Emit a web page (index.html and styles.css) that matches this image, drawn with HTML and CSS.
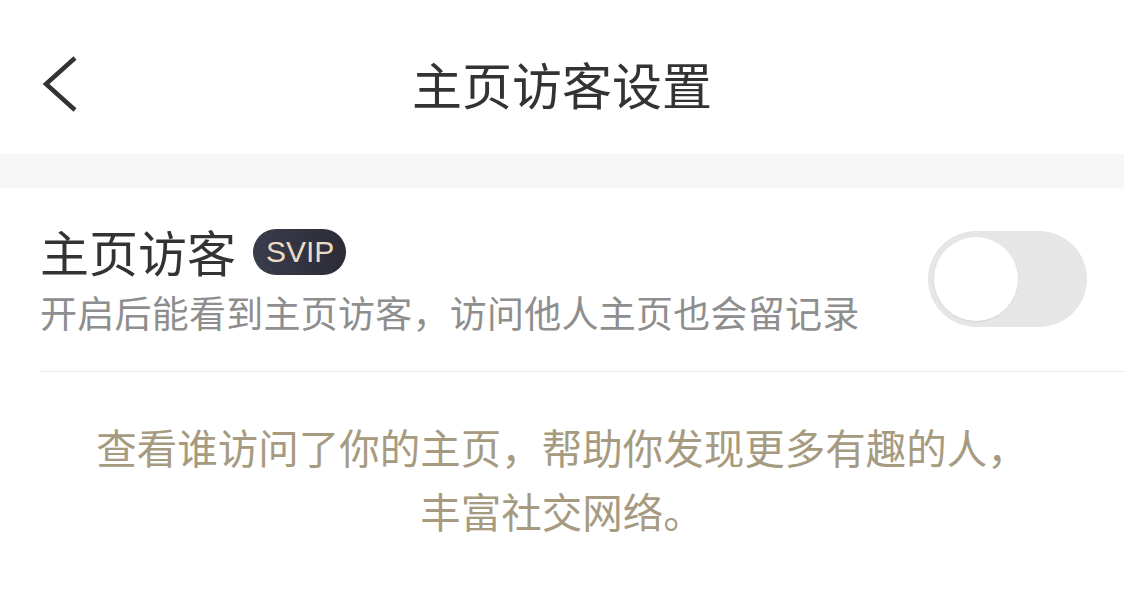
FILE: index.html
```html
<!DOCTYPE html>
<html>

<head>
    <meta charset="utf-8" />
    <title>主页访客设置</title>
    <link rel="stylesheet" href="styles.css">
</head>

<body>
    <div id="app">
        <div class="nav">
            <div class="back">
                <svg width="40" height="60" viewBox="0 0 40 60">
                    <polyline points="33,3 4,29 33,55" fill="none" stroke="#333" stroke-width="4.5" stroke-linecap="butt" stroke-linejoin="miter" />
                </svg>
            </div>
            <div class="nav-title">主页访客设置</div>
            <div></div>
        </div>

        <div class="gap"></div>

        <div class="section">
            <div class="row">
                <div class="info">
                    <div class="label">
                        <span>主页访客</span>
                        <span class="badge">SVIP</span>
                    </div>
                    <div class="desc">开启后能看到主页访客，访问他人主页也会留记录</div>
                </div>
                <div class="switch">
                    <div class="knob"></div>
                </div>
            </div>
        </div>

        <p class="tip">查看谁访问了你的主页，帮助你发现更多有趣的人，<br>丰富社交网络。</p>
    </div>
</body>

</html>
```

FILE: styles.css
```css
body {
    padding: 0;
    margin: 0;
    background: #fff;
    font-family: "Noto Sans CJK SC", "Noto Sans", sans-serif;
}

.nav {
    display: grid;
    grid-template-columns: 1fr auto 1fr;
    align-items: center;
    height: 154px;
    padding-top: 12px;
    box-sizing: border-box;
}

.back {
    padding-left: 42px;
    display: flex;
    margin-top: 4px;
}

.nav-title {
    font-size: 50px;
    line-height: 60px;
    color: #333;
}

.gap {
    height: 34px;
    background-color: #f6f6f6;
}

.section {
    margin-left: 40px;
    border-bottom: 1px solid #ebebeb;
}

.row {
    display: flex;
    align-items: center;
    justify-content: space-between;
    padding: 33px 37px 34px 0;
}

.label {
    display: flex;
    align-items: center;
    font-size: 49px;
    line-height: 60px;
    color: #333;
}

.badge {
    margin-left: 17px;
    margin-top: 2px;
    height: 46px;
    padding: 0 12px 0 13px;
    border-radius: 23px;
    background: linear-gradient(90deg, #3b3c4c, #2b2c36);
    color: #eadcc4;
    font-family: "Liberation Sans", Arial, sans-serif;
    font-size: 30px;
    line-height: 46px;
}

.desc {
    margin-top: 6px;
    font-size: 37px;
    letter-spacing: 0.25px;
    line-height: 50px;
    color: #8e8e8e;
}

.switch {
    width: 159px;
    height: 96px;
    border-radius: 48px;
    background-color: #e6e6e6;
    display: flex;
    align-items: center;
    padding-left: 6px;
    box-sizing: border-box;
}

.knob {
    width: 84px;
    height: 84px;
    border-radius: 50%;
    background-color: #fff;
    box-shadow: 0 1px 2px rgba(0, 0, 0, 0.08);
}

.tip {
    margin: 0;
    padding-top: 43px;
    text-align: center;
    font-size: 40.5px;
    line-height: 64px;
    color: #a69b80;
}
```
